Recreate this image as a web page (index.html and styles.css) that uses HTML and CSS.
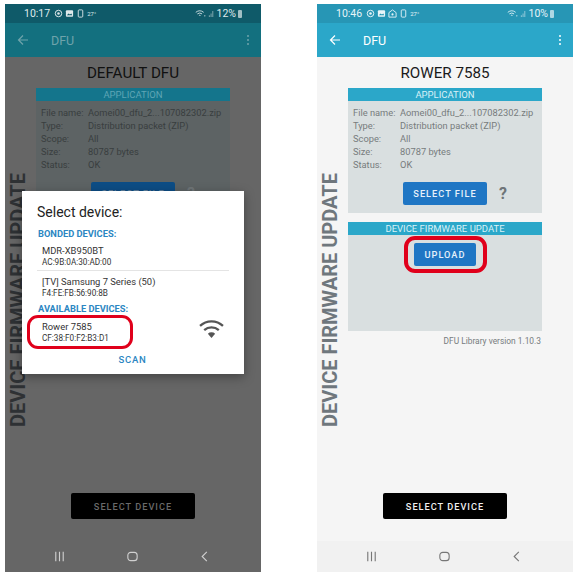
FILE: index.html
```html
<!DOCTYPE html>
<html>

<head>
  <meta http-equiv="Content-Type" content="text/html;charset=utf-8" />
  <title>Device Firmware Update</title>
  <link rel="stylesheet" href="styles.css">
</head>

<body>
  <div class="screens">

    <!-- left phone: device dialog open -->
    <div class="phone dimmed">
      <div class="statusBar">
        <span class="clock">10:17</span>
        <svg class="statIcon" viewBox="0 0 10 10"><circle cx="5" cy="5" r="3.6" fill="none" stroke="currentColor" stroke-width="1.1"/><circle cx="5" cy="5" r="1.4" fill="currentColor"/></svg>
        <svg class="statIcon" viewBox="0 0 10 10"><rect x="1" y="1.5" width="8" height="7" rx="1" fill="currentColor"/><path d="M2 7l2-2 1.5 1.2L7 5l1 2z" fill="#0f5a69"/></svg>
        <svg class="statIcon" viewBox="0 0 10 10"><rect x="2.5" y="1" width="5" height="8" rx="1" fill="none" stroke="currentColor" stroke-width="1"/></svg>
        <span class="temp">27°</span>
        <span class="spacer"></span>
        <svg class="statWifi" viewBox="0 0 14 10"><path d="M1 3.5a8 8 0 0 1 10 0M3 5.5a5 5 0 0 1 6 0M5 7.5a2 2 0 0 1 2 0" fill="none" stroke="currentColor" stroke-width="1.1"/><circle cx="12.5" cy="8" r=".8" fill="currentColor"/></svg>
        <svg class="statSignal" viewBox="0 0 8 10"><path d="M1 9h1V7H1zM3 9h1V5H3zM5 9h1V2H5z" fill="currentColor" opacity=".6"/></svg>
        <span class="battery">12%</span>
        <span class="batteryIcon"></span>
      </div>
      <div class="toolbar">
        <svg class="backArrow" viewBox="0 0 12 12"><path d="M11 6H1.5M6 1.5L1.5 6 6 10.5" fill="none" stroke="currentColor" stroke-width="1.2"/></svg>
        <span class="toolbarTitle">DFU</span>
        <span class="menuDots"><i></i><i></i><i></i></span>
      </div>
      <div class="content">
        <div class="sideTitle">DEVICE FIRMWARE UPDATE</div>
        <div class="main">
          <div class="deviceName">DEFAULT DFU</div>
          <div class="panel appPanel">
            <div class="panelHeader">APPLICATION</div>
            <div class="info">
              <span>File name:</span><span>Aomei00_dfu_2...107082302.zip</span>
              <span>Type:</span><span>Distribution packet (ZIP)</span>
              <span>Scope:</span><span>All</span>
              <span>Size:</span><span>80787 bytes</span>
              <span>Status:</span><span>OK</span>
            </div>
            <div class="fileActions">
              <div class="btn selectFile">SELECT FILE</div>
              <span class="help">?</span>
            </div>
          </div>
        </div>
        <div class="btnBlack">SELECT DEVICE</div>
      </div>
      <div class="navBar">
        <svg class="navIcon" viewBox="0 0 14 14"><path d="M3 2v10M7 2v10M11 2v10" fill="none" stroke="currentColor" stroke-width="1.2"/></svg>
        <svg class="navIcon" viewBox="0 0 14 14"><rect x="2" y="2.5" width="10" height="9" rx="3.2" fill="none" stroke="currentColor" stroke-width="1.2"/></svg>
        <svg class="navIcon" viewBox="0 0 14 14"><path d="M9.5 2L4.5 7l5 5" fill="none" stroke="currentColor" stroke-width="1.2"/></svg>
      </div>

      <div class="dialog">
        <div class="dialogTitle">Select device:</div>
        <div class="dialogSection">BONDED DEVICES:</div>
        <div class="device divided">
          <div class="deviceTitle">MDR-XB950BT</div>
          <div class="deviceAddr">AC:9B:0A:30:AD:00</div>
        </div>
        <div class="device second">
          <div class="deviceTitle">[TV] Samsung 7 Series (50)</div>
          <div class="deviceAddr">F4:FE:FB:56:90:8B</div>
        </div>
        <div class="dialogSection">AVAILABLE DEVICES:</div>
        <div class="device available">
          <div class="marked">
            <div class="deviceTitle">Rower 7585</div>
            <div class="deviceAddr">CF:38:F0:F2:B3:D1</div>
            <span class="redMark"></span>
          </div>
          <svg class="rssi" viewBox="0 0 24 18"><path d="M1 6.5a16 16 0 0 1 22 0M5 10.5a10.500 10.500 0 0 1 14 0" fill="none" stroke="#555" stroke-width="2.2"/><path d="M8.500 14a5 5 0 0 1 7 0L12 18z" fill="#555"/></svg>
        </div>
        <div class="scan">SCAN</div>
      </div>
    </div>

    <!-- right phone: file and device picked -->
    <div class="phone">
      <div class="statusBar">
        <span class="clock">10:46</span>
        <svg class="statIcon" viewBox="0 0 10 10"><circle cx="5" cy="5" r="3.6" fill="none" stroke="currentColor" stroke-width="1.1"/><circle cx="5" cy="5" r="1.4" fill="currentColor"/></svg>
        <svg class="statIcon" viewBox="0 0 10 10"><rect x="1" y="1.5" width="8" height="7" rx="1" fill="currentColor"/><path d="M2 7l2-2 1.5 1.2L7 5l1 2z" fill="#2796b5"/></svg>
        <svg class="statIcon" viewBox="0 0 10 10"><path d="M5 1l4 3v5H1V4z" fill="none" stroke="currentColor" stroke-width="1"/><circle cx="5" cy="6" r="1.2" fill="currentColor"/></svg>
        <svg class="statIcon" viewBox="0 0 10 10"><rect x="2.500" y="1" width="5" height="8" rx="1" fill="none" stroke="currentColor" stroke-width="1"/></svg>
        <span class="temp">27°</span>
        <span class="spacer"></span>
        <svg class="statWifi" viewBox="0 0 14 10"><path d="M1 3.500a8 8 0 0 1 10 0M3 5.500a5 5 0 0 1 6 0M5 7.500a2 2 0 0 1 2 0" fill="none" stroke="currentColor" stroke-width="1.1"/><circle cx="12.500" cy="8" r=".8" fill="currentColor"/></svg>
        <svg class="statSignal" viewBox="0 0 8 10"><path d="M1 9h1V7H1zM3 9h1V5H3zM5 9h1V2H5z" fill="currentColor" opacity=".6"/></svg>
        <span class="battery">10%</span>
        <span class="batteryIcon"></span>
      </div>
      <div class="toolbar">
        <svg class="backArrow" viewBox="0 0 12 12"><path d="M11 6H1.500M6 1.500L1.500 6 6 10.500" fill="none" stroke="currentColor" stroke-width="1.2"/></svg>
        <span class="toolbarTitle">DFU</span>
        <span class="menuDots"><i></i><i></i><i></i></span>
      </div>
      <div class="content">
        <div class="sideTitle">DEVICE FIRMWARE UPDATE</div>
        <div class="main">
          <div class="deviceName">ROWER 7585</div>
          <div class="panel appPanel">
            <div class="panelHeader">APPLICATION</div>
            <div class="info">
              <span>File name:</span><span>Aomei00_dfu_2...107082302.zip</span>
              <span>Type:</span><span>Distribution packet (ZIP)</span>
              <span>Scope:</span><span>All</span>
              <span>Size:</span><span>80787 bytes</span>
              <span>Status:</span><span>OK</span>
            </div>
            <div class="fileActions">
              <div class="btn selectFile">SELECT FILE</div>
              <span class="help">?</span>
            </div>
          </div>
          <div class="panel dfuPanel">
            <div class="panelHeader">DEVICE FIRMWARE UPDATE</div>
            <div class="btn upload">UPLOAD<span class="redMark"></span></div>
          </div>
          <div class="libVersion">DFU Library version 1.10.3</div>
        </div>
        <div class="btnBlack">SELECT DEVICE</div>
      </div>
      <div class="navBar">
        <svg class="navIcon" viewBox="0 0 14 14"><path d="M3 2v10M7 2v10M11 2v10" fill="none" stroke="currentColor" stroke-width="1.2"/></svg>
        <svg class="navIcon" viewBox="0 0 14 14"><rect x="2" y="2.500" width="10" height="9" rx="3.2" fill="none" stroke="currentColor" stroke-width="1.2"/></svg>
        <svg class="navIcon" viewBox="0 0 14 14"><path d="M9.500 2L4.500 7l5 5" fill="none" stroke="currentColor" stroke-width="1.2"/></svg>
      </div>
    </div>

  </div>
</body>

</html>
```

FILE: styles.css
```css
body {
  margin: 0;
  background-color: white;
  font-family: Roboto, "Liberation Sans", sans-serif;
}

.screens {
  display: flex;
  gap: 56px;
  padding: 4px 0 0 5px;
}

.phone {
  --status: #2796b5;
  --bar: #2ba7c9;
  --barText: #ffffff;
  --page: #f5f5f5;
  --panel: #d9dfe0;
  --text: #777c7d;
  --title: #1a1a1a;
  --side: #6f777d;
  --btn: #1f76c4;
  --btnText: #e6f1fa;
  --black: #000000;
  --blackText: #f0f0f0;
  --nav: #f1f1f1;
  --navIcon: #777777;

  position: relative;
  flex: none;
  width: 256px;
  height: 568px;
  display: flex;
  flex-direction: column;
  background: var(--page);
}

.dimmed {
  --status: #0f5a69;
  --bar: #13707f;
  --barText: #6fa3ab;
  --page: #666666;
  --panel: #5d6364;
  --text: #393e3f;
  --title: #111111;
  --side: #2e3134;
  --btn: #0d4d85;
  --btnText: #5c7f9e;
  --blackText: #6a6a6a;
  --nav: #666666;
  --navIcon: #d0d0d0;
}

.dimmed .panelHeader {
  background: #14758c;
  color: #5fa5b5;
}

.dimmed .statusBar {
  color: #dfe9eb;
}

.statusBar {
  height: 19px;
  display: flex;
  align-items: center;
  gap: 2px;
  padding: 0 19px;
  background: var(--status);
  color: #e8f4f8;
  font-size: 10px;
}

.clock {
  font-size: 10.5px;
  margin-right: 2px;
}

.statIcon {
  width: 9px;
  height: 9px;
}

.temp {
  font-size: 6px;
}

.spacer {
  flex: 1;
}

.statWifi {
  width: 11px;
  height: 9px;
}

.statSignal {
  width: 7px;
  height: 9px;
}

.battery {
  font-size: 10.5px;
}

.batteryIcon {
  width: 4px;
  height: 8px;
  background: currentColor;
  opacity: .7;
  border-radius: 1px;
}

.toolbar {
  height: 34px;
  display: flex;
  align-items: center;
  padding: 0 12px;
  background: var(--bar);
  color: var(--barText);
}

.backArrow {
  width: 12px;
  height: 12px;
}

.toolbarTitle {
  margin-left: 22px;
  font-size: 12.5px;
  flex: 1;
}

.menuDots {
  display: flex;
  flex-direction: column;
  gap: 2px;
}

.menuDots i {
  display: block;
  width: 2px;
  height: 2px;
  border-radius: 50%;
  background: currentColor;
}

.content {
  flex: 1;
  display: flex;
  flex-direction: column;
  position: relative;
}

.sideTitle {
  position: absolute;
  left: 3px;
  top: 115px;
  height: 256px;
  writing-mode: vertical-rl;
  transform: rotate(180deg);
  text-align: center;
  font-size: 20px;
  font-weight: 700;
  line-height: 20px;
  color: var(--side);
  white-space: nowrap;
}

.main {
  flex: 1;
  padding: 0 31px;
}

.deviceName {
  margin: 8px 0 6px;
  text-align: center;
  line-height: 17px;
  font-size: 15.2px;
  color: var(--title);
}

.panel {
  background: var(--panel);
}

.panelHeader {
  align-self: stretch;
  height: 13px;
  line-height: 13px;
  text-align: center;
  font-size: 9.5px;
  background: var(--bar);
  color: #d9f1f7;
}

.appPanel {
  height: 125px;
}

.dfuPanel {
  height: 109px;
  margin-top: 9px;
  display: flex;
  flex-direction: column;
  align-items: center;
}

.info {
  display: grid;
  grid-template-columns: 47px 1fr;
  padding: 6px 0 0 5px;
  font-size: 9.3px;
  line-height: 12.9px;
  color: var(--text);
  white-space: nowrap;
}

.fileActions {
  display: flex;
  align-items: center;
  margin: 10px 0 0 55px;
}

.btn {
  position: relative;
  display: flex;
  align-items: center;
  justify-content: center;
  border-radius: 2px;
  background: var(--btn);
  color: var(--btnText);
  font-size: 9.2px;
  font-weight: 500;
  letter-spacing: 1px;
}

.selectFile {
  width: 84px;
  height: 23px;
}

.upload {
  width: 62px;
  height: 23px;
  margin-top: 8px;
}

.help {
  margin-left: 12px;
  font-size: 16px;
  font-weight: 700;
  color: #6f7578;
}

.redMark {
  position: absolute;
  top: -7px;
  bottom: -7px;
  left: -10px;
  right: -11px;
  border: 4px solid #e0001b;
  border-radius: 11px;
}

.libVersion {
  margin-top: 5px;
  text-align: right;
  padding-right: 1px;
  font-size: 8.4px;
  line-height: 10px;
  color: #777c7e;
}

.btnBlack {
  align-self: center;
  width: 124px;
  height: 26px;
  margin-bottom: 22px;
  display: flex;
  align-items: center;
  justify-content: center;
  border-radius: 2px;
  background: var(--black);
  color: var(--blackText);
  font-size: 9.2px;
  font-weight: 500;
  letter-spacing: 1px;
}

.navBar {
  height: 31px;
  display: flex;
  align-items: center;
  justify-content: space-between;
  padding: 0 50px 0 48px;
  background: var(--nav);
  color: var(--navIcon);
}

.navIcon {
  width: 13px;
  height: 13px;
}

/* dialog sits over the dimmed screen */
.dialog {
  position: absolute;
  left: 17px;
  top: 187px;
  width: 222px;
  height: 183px;
  box-sizing: border-box;
  padding: 13px 15px 0;
  background: white;
  box-shadow: 0 3px 10px rgba(0, 0, 0, .35);
  color: #333333;
}

.dialogTitle {
  font-size: 14px;
  line-height: 17px;
  color: #222222;
}

.dialogSection {
  margin-top: 4px;
  padding-left: 1px;
  font-size: 9.3px;
  line-height: 12px;
  font-weight: 700;
  color: #2b86c2;
}

.dialogTitle + .dialogSection {
  margin-top: 7px;
}

.device {
  padding: 4px 0 0 5px;
  height: 31px;
  box-sizing: border-box;
}

.divided {
  border-bottom: 1px solid #e4e4e4;
}

.second {
  height: 28px;
}

.deviceTitle {
  font-size: 9.4px;
  line-height: 13px;
}

.deviceAddr {
  font-size: 8.200px;
  line-height: 11px;
}

.available {
  display: flex;
  align-items: center;
  justify-content: space-between;
  padding: 2px 5px 0 5px;
}

.marked {
  position: relative;
}

.marked .redMark {
  top: -5px;
  bottom: -5px;
  left: -15px;
  right: -24px;
  border-width: 3px;
}

.rssi {
  width: 25px;
  height: 19px;
  margin-top: -6px;
}

.scan {
  margin-top: 8px;
  text-align: center;
  font-size: 9.5px;
  font-weight: 500;
  letter-spacing: .8px;
  color: #2b86c2;
  padding-right: 1px;
}
```
